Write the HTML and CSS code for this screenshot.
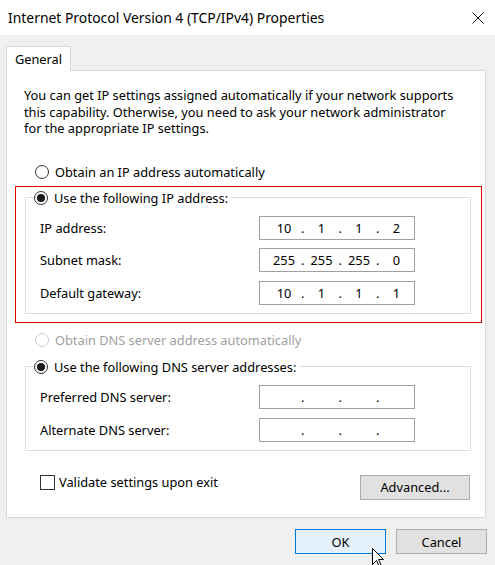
FILE: index.html
```html
<!doctype html>
<html lang="en">
<head>
    <meta charset="UTF-8">
    <title>Internet Protocol Version 4 (TCP/IPv4) Properties</title>
    <link rel="stylesheet" href="styles.css">
</head>
<body>
<div class="window">
    <div class="titlebar">
        <span class="title">Internet Protocol Version 4 (TCP/IPv4) Properties</span>
        <svg class="close" width="12" height="12" viewBox="0 0 12 12">
            <path d="M0.5 0.5 L11.5 11.5 M11.5 0.5 L0.5 11.5" stroke="#111" stroke-width="1" fill="none"/>
        </svg>
    </div>
    <div class="dialog">
        <div class="tabs">
            <div class="tab">General</div>
        </div>
        <div class="panel">
            <p class="intro">You can get IP settings assigned automatically if your network supports<br>this capability. Otherwise, you need to ask your network administrator<br>for the appropriate IP settings.</p>

            <div class="radio-row first-radio">
                <span class="radio"></span>
                <span>Obtain an IP address automatically</span>
            </div>

            <div class="highlight">
                <fieldset class="group ip-group">
                    <legend class="radio-row">
                        <span class="radio checked"></span>
                        <span>Use the following IP address:</span>
                    </legend>
                    <div class="field-row">
                        <label>IP address:</label>
                        <div class="ipbox">
                            <span class="octet">10</span><span class="dot">.</span><span class="octet">1</span><span class="dot">.</span><span class="octet">1</span><span class="dot">.</span><span class="octet">2</span>
                        </div>
                    </div>
                    <div class="field-row">
                        <label>Subnet mask:</label>
                        <div class="ipbox">
                            <span class="octet">255</span><span class="dot">.</span><span class="octet">255</span><span class="dot">.</span><span class="octet">255</span><span class="dot">.</span><span class="octet">0</span>
                        </div>
                    </div>
                    <div class="field-row">
                        <label>Default gateway:</label>
                        <div class="ipbox">
                            <span class="octet">10</span><span class="dot">.</span><span class="octet">1</span><span class="dot">.</span><span class="octet">1</span><span class="dot">.</span><span class="octet">1</span>
                        </div>
                    </div>
                </fieldset>
            </div>

            <div class="radio-row disabled dns-auto">
                <span class="radio"></span>
                <span>Obtain DNS server address automatically</span>
            </div>

            <fieldset class="group dns-group">
                <legend class="radio-row">
                    <span class="radio checked"></span>
                    <span>Use the following DNS server addresses:</span>
                </legend>
                <div class="field-row">
                    <label>Preferred DNS server:</label>
                    <div class="ipbox">
                        <span class="octet"></span><span class="dot">.</span><span class="octet"></span><span class="dot">.</span><span class="octet"></span><span class="dot">.</span><span class="octet"></span>
                    </div>
                </div>
                <div class="field-row">
                    <label>Alternate DNS server:</label>
                    <div class="ipbox">
                        <span class="octet"></span><span class="dot">.</span><span class="octet"></span><span class="dot">.</span><span class="octet"></span><span class="dot">.</span><span class="octet"></span>
                    </div>
                </div>
            </fieldset>

            <div class="bottom-row">
                <div class="check-row">
                    <span class="checkbox"></span>
                    <span>Validate settings upon exit</span>
                </div>
                <button class="btn advanced">Advanced...</button>
            </div>
        </div>
        <div class="actions">
            <button class="btn primary">OK</button>
            <button class="btn">Cancel</button>
        </div>
    </div>
    <svg class="cursor" width="12" height="19" viewBox="0 0 12 19">
        <path d="M0.5 0.5 L0.5 16.5 L4.5 12.5 L7 18 L9 17 L6.5 11.5 L11.5 11.5 Z" fill="#fff" stroke="#000" stroke-width="1" stroke-linejoin="miter"/>
    </svg>
</div>
</body>
</html>
```

FILE: styles.css
```css
body {
    margin: 0;
    padding: 0;
    font-family: "Noto Sans", "Open Sans", sans-serif;
    font-size: 12.8px;
    color: #000;
}
.window {
    position: relative;
    width: 495px;
    height: 565px;
    background: #f0f0f0;
    overflow: hidden;
}
.titlebar {
    display: flex;
    align-items: center;
    justify-content: space-between;
    height: 35px;
    padding: 0 11px 0 8px;
    background: #fff;
    box-sizing: border-box;
}
.title {
    font-size: 13.9px;
}
.close {
    display: block;
    margin-top: 1px;
}
.dialog {
    padding: 11px 8px 0 6px;
}
.tabs {
    display: flex;
    height: 25px;
    margin-bottom: -1px;
}
.tab {
    position: relative;
    width: 65px;
    height: 25px;
    line-height: 24px;
    text-align: center;
    background: #fff;
    border: 1px solid #d9d9d9;
    border-bottom: none;
    box-sizing: border-box;
    z-index: 1;
}
.panel {
    display: flex;
    flex-direction: column;
    width: 480px;
    height: 448px;
    background: #fff;
    border: 1px solid #d9d9d9;
    box-sizing: border-box;
}
.intro {
    margin: 16px 0 0 17px;
    line-height: 16.5px;
    white-space: nowrap;
}
.radio-row {
    display: flex;
    align-items: center;
    height: 16px;
    gap: 6px;
}
.first-radio {
    margin: 27px 0 0 28px;
}
.radio {
    position: relative;
    width: 14px;
    height: 14px;
    border: 1px solid #333;
    border-radius: 50%;
    box-sizing: border-box;
    background: #fff;
}
.radio.checked::after {
    content: "";
    position: absolute;
    left: 2px;
    top: 2px;
    width: 8px;
    height: 8px;
    border-radius: 50%;
    background: #1a1a1a;
}
.disabled {
    color: #a0a0a0;
}
.disabled .radio {
    border-color: #cccccc;
}
.highlight {
    width: 467px;
    height: 137px;
    margin: 6px 0 0 8px;
    border: 1px solid #e00000;
    box-sizing: border-box;
}
.group {
    width: 446px;
    margin: 0;
    padding: 10px 55px 8px 0;
    border: 1px solid #dcdcdc;
    box-sizing: border-box;
    min-inline-size: 0;
    display: flex;
    flex-direction: column;
}
.group legend {
    padding: 0 3px 0 0;
    margin-left: 8px;
}
.ip-group {
    margin: 3px 0 0 9px;
    gap: 8.5px;
}
.dns-group {
    margin: 11px 0 0 18px;
    gap: 9px;
}
.field-row {
    display: grid;
    grid-template-columns: 1fr 156px;
    align-items: center;
    height: 24px;
    padding-left: 14px;
}
.ipbox {
    display: flex;
    align-items: center;
    height: 24px;
    padding-left: 9px;
    border: 1px solid #a0a0a0;
    box-sizing: border-box;
    background: #fff;
}
.octet {
    width: 30px;
    text-align: center;
}
.dot {
    width: 7.5px;
    text-align: center;
}
.dns-auto {
    margin: 9px 0 0 28px;
}
.bottom-row {
    display: flex;
    justify-content: space-between;
    align-items: flex-start;
    margin: 24px 15px 0 33px;
}
.check-row {
    display: flex;
    align-items: center;
    gap: 4px;
    height: 15px;
}
.checkbox {
    width: 15px;
    height: 15px;
    border: 1px solid #333;
    box-sizing: border-box;
}
.btn {
    width: 91px;
    height: 25px;
    padding: 0;
    font-family: "Noto Sans", "Open Sans", sans-serif;
    font-size: 12.8px;
    color: #000;
    background: #e1e1e1;
    border: 1px solid #adadad;
}
.advanced {
    width: 110px;
}
.actions {
    display: flex;
    justify-content: flex-end;
    gap: 10px;
    margin-top: 11px;
}
.primary {
    background: #e5f1fb;
    border: 1px solid #0078d7;
}
.cursor {
    position: absolute;
    left: 372px;
    top: 548px;
}
```
